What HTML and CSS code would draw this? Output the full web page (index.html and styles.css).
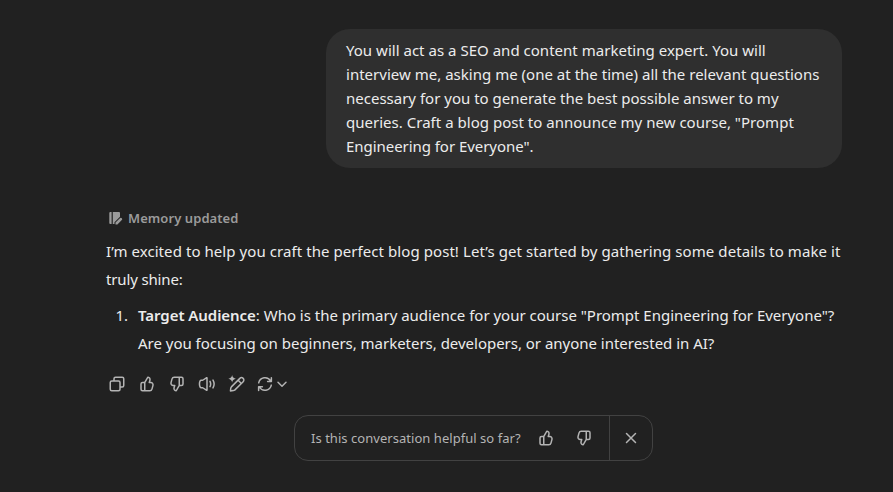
FILE: index.html
```html
<!DOCTYPE html>
<html lang="en">
<head>
<meta charset="utf-8">
<title>Conversation</title>
<link rel="stylesheet" href="styles.css">
</head>
<body>
<svg class="defs" width="0" height="0" aria-hidden="true">
  <symbol id="thumb" viewBox="0 0 24 24"><path fill="currentColor" fill-rule="evenodd" d="M12.132 2.504a1 1 0 0 1 .992-.496l.454.056c2.467.309 4.058 2.77 3.327 5.146L16.354 9h.718c2.638 0 4.553 2.508 3.859 5.053l-1.363 5A4 4 0 0 1 15.709 22H6a3 3 0 0 1-3-3v-7a3 3 0 0 1 3-3h2.250a.22.22 0 0 0 .19-.11zM10 20h5.709a2 2 0 0 0 1.929-1.474l1.364-5A2 2 0 0 0 17.072 11H15a1 1 0 0 1-.956-1.294l.949-3.084a2 2 0 0 0-1.461-2.537L10.180 9.890a1.200 1.200 0 0 0-.18.61zM8 11H6a1 1 0 0 0-1 1v7a1 1 0 0 0 1 1h2z"/></symbol>
</svg>
<main class="thread">
  <div class="bubble">
    <span class="line u1">You will act as a SEO and content marketing expert. You will</span>
    <span class="line u2">interview me, asking me (one at the time) all the relevant questions</span>
    <span class="line u3">necessary for you to generate the best possible answer to my</span>
    <span class="line u4">queries. Craft a blog post to announce my new course, "Prompt</span>
    <span class="line u5">Engineering for Everyone".</span>
  </div>
  <section class="reply">
    <div class="memory">
      <svg width="14" height="14" viewBox="0 0 14 14"><path fill="currentColor" d="M1.300 1h1.300v12H1.300a1 1 0 0 1-1-1V2a1 1 0 0 1 1-1zM3.800 1H10a1 1 0 0 1 1 1v3.800L5.500 11.300V13H3.800z"/><path fill="currentColor" d="M6.500 13.500V11.600l4.400-4.400a1.250 1.250 0 0 1 1.900 1.900l-4.400 4.400z"/></svg>
      <span class="line m1">Memory updated</span>
    </div>
    <p class="para">
      <span class="line a1">I’m excited to help you craft the perfect blog post! Let’s get started by gathering some details to make it</span>
      <span class="line a2">truly shine:</span>
    </p>
    <ol class="questions">
      <li>
        <span class="line q1"><strong>Target Audience</strong>: Who is the primary audience for your course "Prompt Engineering for Everyone"?</span>
        <span class="line q2">Are you focusing on beginners, marketers, developers, or anyone interested in AI?</span>
      </li>
    </ol>
    <div class="actions">
      <button aria-label="Copy"><svg width="18" height="18" viewBox="0 0 24 24"><path fill="currentColor" fill-rule="evenodd" d="M7 5a3 3 0 0 1 3-3h9a3 3 0 0 1 3 3v9a3 3 0 0 1-3 3h-2v2a3 3 0 0 1-3 3H5a3 3 0 0 1-3-3v-9a3 3 0 0 1 3-3h2zm2 2h5a3 3 0 0 1 3 3v5h2a1 1 0 0 0 1-1V5a1 1 0 0 0-1-1h-9a1 1 0 0 0-1 1zM5 9a1 1 0 0 0-1 1v9a1 1 0 0 0 1 1h9a1 1 0 0 0 1-1v-9a1 1 0 0 0-1-1z"/></svg></button>
      <button aria-label="Good response"><svg width="18" height="18"><use href="#thumb"/></svg></button>
      <button aria-label="Bad response"><svg class="down" width="18" height="18"><use href="#thumb"/></svg></button>
      <button aria-label="Read aloud"><svg class="stroke" width="18" height="18" viewBox="0 0 24 24"><path d="M12 4.200v15.600q0 .9-.8.500L6.300 17H4a2 2 0 0 1-1.300-1.100Q1.200 12 2.700 8.100A2 2 0 0 1 4 7h2.300l4.900-3.300q.8-.4.800.5zM16 8.500q1.800 3.500 0 7M20 6.800q3 5.200 0 10.400"/></svg></button>
      <button aria-label="Edit in canvas"><svg class="stroke" width="18" height="18" viewBox="0 0 24 24"><path d="M4.500 15.800 15.800 4.500a3.100 3.100 0 0 1 4.400 4.400L8.900 20.200Q8 21 3.300 21.200 3.500 16.700 4.500 15.800zM13.500 7l4.300 4.300"/><path class="solid" d="M5.500 0q.7 4.300 5 5-4.300.7-5 5Q4.800 5.700.5 5 4.800 4.300 5.500 0z"/></svg></button>
      <button class="regen" aria-label="Regenerate"><svg class="stroke" width="18" height="18" viewBox="0 0 24 24"><path d="M3.600 10.500A8.600 8.600 0 0 1 19.500 8M20.500 3.500V8.500H15.500M20.400 13.500A8.600 8.600 0 0 1 4.500 16M3.500 20.500V15.500H8.500"/></svg><svg class="stroke" width="12" height="12" viewBox="0 0 12 12"><path class="chev" d="m2 4.300 4 4 4-4"/></svg></button>
    </div>
  </section>
  <div class="feedback">
    <span class="line f1">Is this conversation helpful so far?</span>
    <button aria-label="Yes"><svg width="18" height="18"><use href="#thumb"/></svg></button>
    <button aria-label="No"><svg class="down" width="18" height="18"><use href="#thumb"/></svg></button>
    <button class="close" aria-label="Close"><svg class="stroke" width="18" height="18" viewBox="0 0 24 24"><path d="m6 6 12 12M18 6 6 18"/></svg></button>
  </div>
</main>
</body>
</html>
```
FILE: styles.css
```css
* { box-sizing: border-box; }
body {
  margin: 0;
  height: 492px;
  overflow: hidden;
  background: #212121;
  color: #ececec;
  font-family: "Noto Sans", "Open Sans", sans-serif;
  font-size: 15px;
}
.defs { display: block; }
.thread {
  width: 736px;
  margin-left: 106px;
  padding-top: 29px;
  display: flex;
  flex-direction: column;
}
.line { display: block; width: max-content; white-space: nowrap; }
.u1 { letter-spacing: 0.02px; }
.u2 { letter-spacing: 0.015px; }
.u4 { letter-spacing: 0.02px; }
.u5 { letter-spacing: -0.05px; }
.a1 { letter-spacing: 0.07px; }
.a2 { letter-spacing: -0.15px; }
.q1 { letter-spacing: -0.01px; }
.q2 { letter-spacing: -0.02px; }
.m1 { letter-spacing: 0.07px; }
.bubble {
  align-self: flex-end;
  width: 516px;
  height: 139px;
  padding: 9px 20px;
  border-radius: 24px;
  background: #2f2f2f;
  line-height: 24px;
}
.reply { margin-top: 40px; }
.memory {
  display: flex;
  align-items: center;
  gap: 5px;
  height: 20px;
  padding-left: 3px;
  color: #9b9b9b;
  font-size: 13px;
  font-weight: 600;
}
.para { margin: 9px 0 8px; line-height: 28px; }
.questions { margin: 0; padding: 0; list-style: none; counter-reset: q; line-height: 28px; }
.questions li { display: grid; grid-template-columns: 22px 1fr; column-gap: 10px; counter-increment: q; }
.questions li::before { content: counter(q) "."; grid-row: 1 / span 2; text-align: right; }
.questions .line { grid-column: 2; }
.questions strong { font-weight: 600; letter-spacing: -0.05px; }
.actions { display: flex; margin: 12px 0 0 -4px; }
button {
  display: flex;
  align-items: center;
  justify-content: center;
  width: 30px;
  height: 30px;
  padding: 0;
  border: 0;
  background: none;
  color: #b4b4b4;
}
.down { transform: rotate(180deg); }
.stroke { fill: none; stroke: currentColor; stroke-width: 2; stroke-linecap: round; stroke-linejoin: round; }
.stroke .solid { fill: currentColor; stroke: none; }
.stroke .chev { stroke-width: 1.5; }
.actions .regen { width: 40px; gap: 2px; }
.feedback {
  display: flex;
  align-items: center;
  align-self: flex-start;
  width: 359px;
  height: 46px;
  margin: 16px 0 0 188px;
  padding-left: 16px;
  border: 1px solid #424242;
  border-radius: 14px;
  color: #b4b4b4;
  font-size: 13px;
}
.feedback .f1 { width: 220px; letter-spacing: 0.04px; }
.feedback button { width: 30px; margin-right: 8px; }
.feedback .close { width: 43px; height: 44px; margin: 0 0 0 auto; border-left: 1px solid #424242; }
```
